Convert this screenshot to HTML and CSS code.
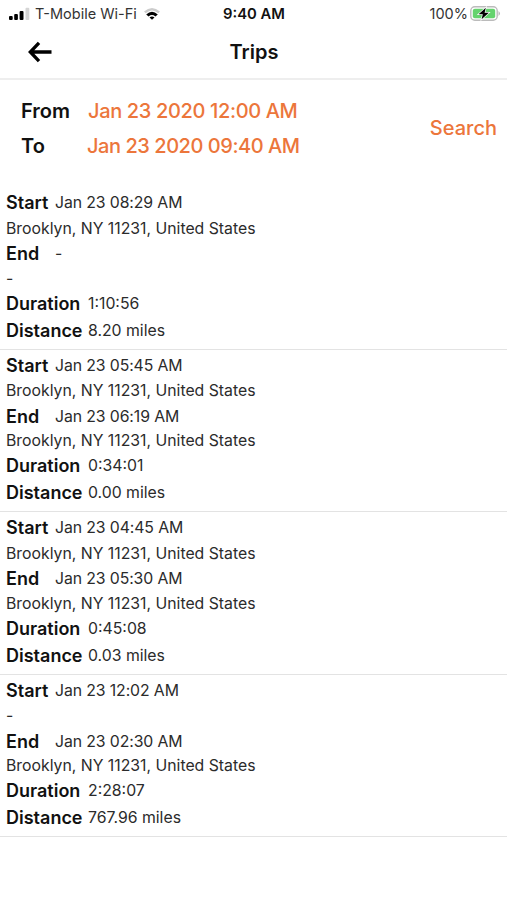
FILE: index.html
```html
<!DOCTYPE html>
<html lang="en">
<head>
    <meta charset="UTF-8">
    <meta name="viewport" content="width=device-width, initial-scale=1.0">
    <title>Trips</title>
    <link rel="stylesheet" href="styles.css">
</head>
<body>

<!-- Status bar -->
<div class="status-bar">
    <div class="status-left">
        <svg class="signal" width="22" height="14" viewBox="0 0 22 14">
            <rect x="0" y="9" width="3.7" height="4" rx="1"/>
            <rect x="5.2" y="7" width="3.7" height="6" rx="1"/>
            <rect x="10.6" y="4" width="3.9" height="9" rx="1"/>
            <rect x="16.5" y="0.7" width="3.8" height="12.3" rx="1" fill="#d5d5d5"/>
        </svg>
        <span class="carrier">T-Mobile Wi-Fi</span>
        <svg class="wifi" width="18" height="14" viewBox="0 0 18 14">
            <path d="M1 4.5Q9-2.6 17 4.5L15.2 6.2Q9 0.9 2.8 6.2Z" fill="#ccc"/>
            <path d="M3.2 7.4Q9 2 14.8 7.4L12.4 9.4Q9 6.7 5.6 9.4Z"/>
            <path d="M6.5 10.4Q9 8.4 11.5 10.4L9 12.8Z"/>
        </svg>
    </div>
    <div class="clock">9:40 AM</div>
    <div class="status-right">
        <span class="percent">100%</span>
        <svg class="battery" width="31" height="15" viewBox="0 0 31 15">
            <rect x="0.8" y="0.8" width="26.4" height="13.4" rx="4" fill="none" stroke="#bbb" stroke-width="1.4"/>
            <rect x="2.8" y="2.8" width="22.4" height="9.4" rx="2" fill="#65d36e"/>
            <path d="M15.8 1.8L8.6 8.3H12.8L11.6 13.2L18.8 6.7H14.6Z" stroke="#fff" stroke-width="1.4" paint-order="stroke"/>
            <path d="M28.5 5Q31.5 7.5 28.5 10Z" fill="#bbb"/>
        </svg>
    </div>
</div>

<!-- Header -->
<div class="header">
    <svg class="back-icon" width="26" height="22" viewBox="0 0 26 22">
        <path d="M12 1.8L3.3 11L12 20.2M3.5 11H24.5" fill="none" stroke="#000" stroke-width="3.3"/>
    </svg>
    <h1 class="title">Trips</h1>
</div>

<!-- Date range -->
<div class="filter">
    <div class="filter-dates">
        <div class="filter-row"><span class="filter-label from-label">From</span><span class="date">Jan 23 2020 12:00 AM</span></div>
        <div class="filter-row"><span class="filter-label">To</span><span class="date to-date">Jan 23 2020 09:40 AM</span></div>
    </div>
    <div class="search">Search</div>
</div>

<!-- Trips -->
<div class="trips">
    <div class="trip">
        <div class="start"><b>Start</b><span>Jan 23 08:29 AM</span></div>
        <div class="start-place"><span>Brooklyn, NY 11231, United States</span></div>
        <div class="end"><b>End</b><span>-</span></div>
        <div class="end-place"><span>-</span></div>
        <div class="duration"><b>Duration</b><span>1:10:56</span></div>
        <div class="distance"><b>Distance</b><span>8.20 miles</span></div>
    </div>
    <div class="trip">
        <div class="start"><b>Start</b><span>Jan 23 05:45 AM</span></div>
        <div class="start-place"><span>Brooklyn, NY 11231, United States</span></div>
        <div class="end"><b>End</b><span>Jan 23 06:19 AM</span></div>
        <div class="end-place"><span>Brooklyn, NY 11231, United States</span></div>
        <div class="duration"><b>Duration</b><span>0:34:01</span></div>
        <div class="distance"><b>Distance</b><span>0.00 miles</span></div>
    </div>
    <div class="trip">
        <div class="start"><b>Start</b><span>Jan 23 04:45 AM</span></div>
        <div class="start-place"><span>Brooklyn, NY 11231, United States</span></div>
        <div class="end"><b>End</b><span>Jan 23 05:30 AM</span></div>
        <div class="end-place"><span>Brooklyn, NY 11231, United States</span></div>
        <div class="duration"><b>Duration</b><span>0:45:08</span></div>
        <div class="distance"><b>Distance</b><span>0.03 miles</span></div>
    </div>
    <div class="trip">
        <div class="start"><b>Start</b><span>Jan 23 12:02 AM</span></div>
        <div class="start-place"><span>-</span></div>
        <div class="end"><b>End</b><span>Jan 23 02:30 AM</span></div>
        <div class="end-place"><span>Brooklyn, NY 11231, United States</span></div>
        <div class="duration"><b>Duration</b><span>2:28:07</span></div>
        <div class="distance"><b>Distance</b><span>767.96 miles</span></div>
    </div>
</div>

</body>
</html>
```
FILE: styles.css
```css
* {
    box-sizing: border-box;
}

body {
    margin: 0;
    background: #fff;
    color: #111;
    font-family: Inter, sans-serif;
    white-space: nowrap;
}

svg {
    display: block;
    flex: none;
}

/* Status bar */
.status-bar {
    display: grid;
    grid-template-columns: 1fr auto 1fr;
    align-items: center;
    height: 27px;
    padding: 0 6px 0 9px;
    font-size: 15px;
}

.status-left,
.status-right {
    display: flex;
    align-items: center;
}

.status-right {
    justify-content: flex-end;
}

.carrier {
    margin: 0 6px 0 4px;
    color: #333;
    font-size: 14.5px;
}

.clock {
    margin-right: 2px;
    font-size: 14.8px;
    font-weight: 600;
}

.percent {
    margin-right: 2px;
    color: #333;
    font-size: 14.5px;
}

/* Header */
.header {
    display: grid;
    grid-template-columns: 1fr auto 1fr;
    align-items: center;
    height: 53px;
    padding: 0 26px 2px 27px;
    border-bottom: 2px solid #eee;
}

.title {
    margin: 0;
    font-size: 20px;
    font-weight: 600;
}

/* Date range */
.filter {
    display: flex;
    justify-content: space-between;
    align-items: center;
    height: 98px;
    padding: 0 10px 2px 21px;
    font-size: 20px;
    font-weight: 600;
}

.filter-row {
    display: flex;
    height: 35px;
    align-items: center;
}

.filter-label {
    width: 66px;
}

.from-label {
    width: 67px;
}

.date,
.search {
    color: #ec763b;
}

.date {
    font-weight: 500;
    letter-spacing: -0.35px;
}

.to-date {
    letter-spacing: -0.45px;
}

.search {
    font-weight: 500;
}

/* Trips */
.trips {
    padding-top: 9px;
}

.trip {
    height: 162.5px;
    padding: 3px 0 0 6px;
    border-bottom: 1px solid #e3e3e3;
    font-size: 15.8px;
}

.trip > div {
    display: flex;
    align-items: center;
    height: 25px;
}

.trip b {
    font-size: 18px;
    font-weight: 600;
}

.trip span {
    color: #2b2b2b;
}

.trip .start span,
.trip .end span {
    letter-spacing: -0.1px;
}

.trip .start-place {
    height: 26px;
}

.trip .end-place {
    height: 24px;
}

.trip .duration {
    height: 26.5px;
}

.trip .distance {
    height: 27px;
}

.start b,
.end b {
    width: 49px;
}

.duration b,
.distance b {
    width: 82px;
}
```
